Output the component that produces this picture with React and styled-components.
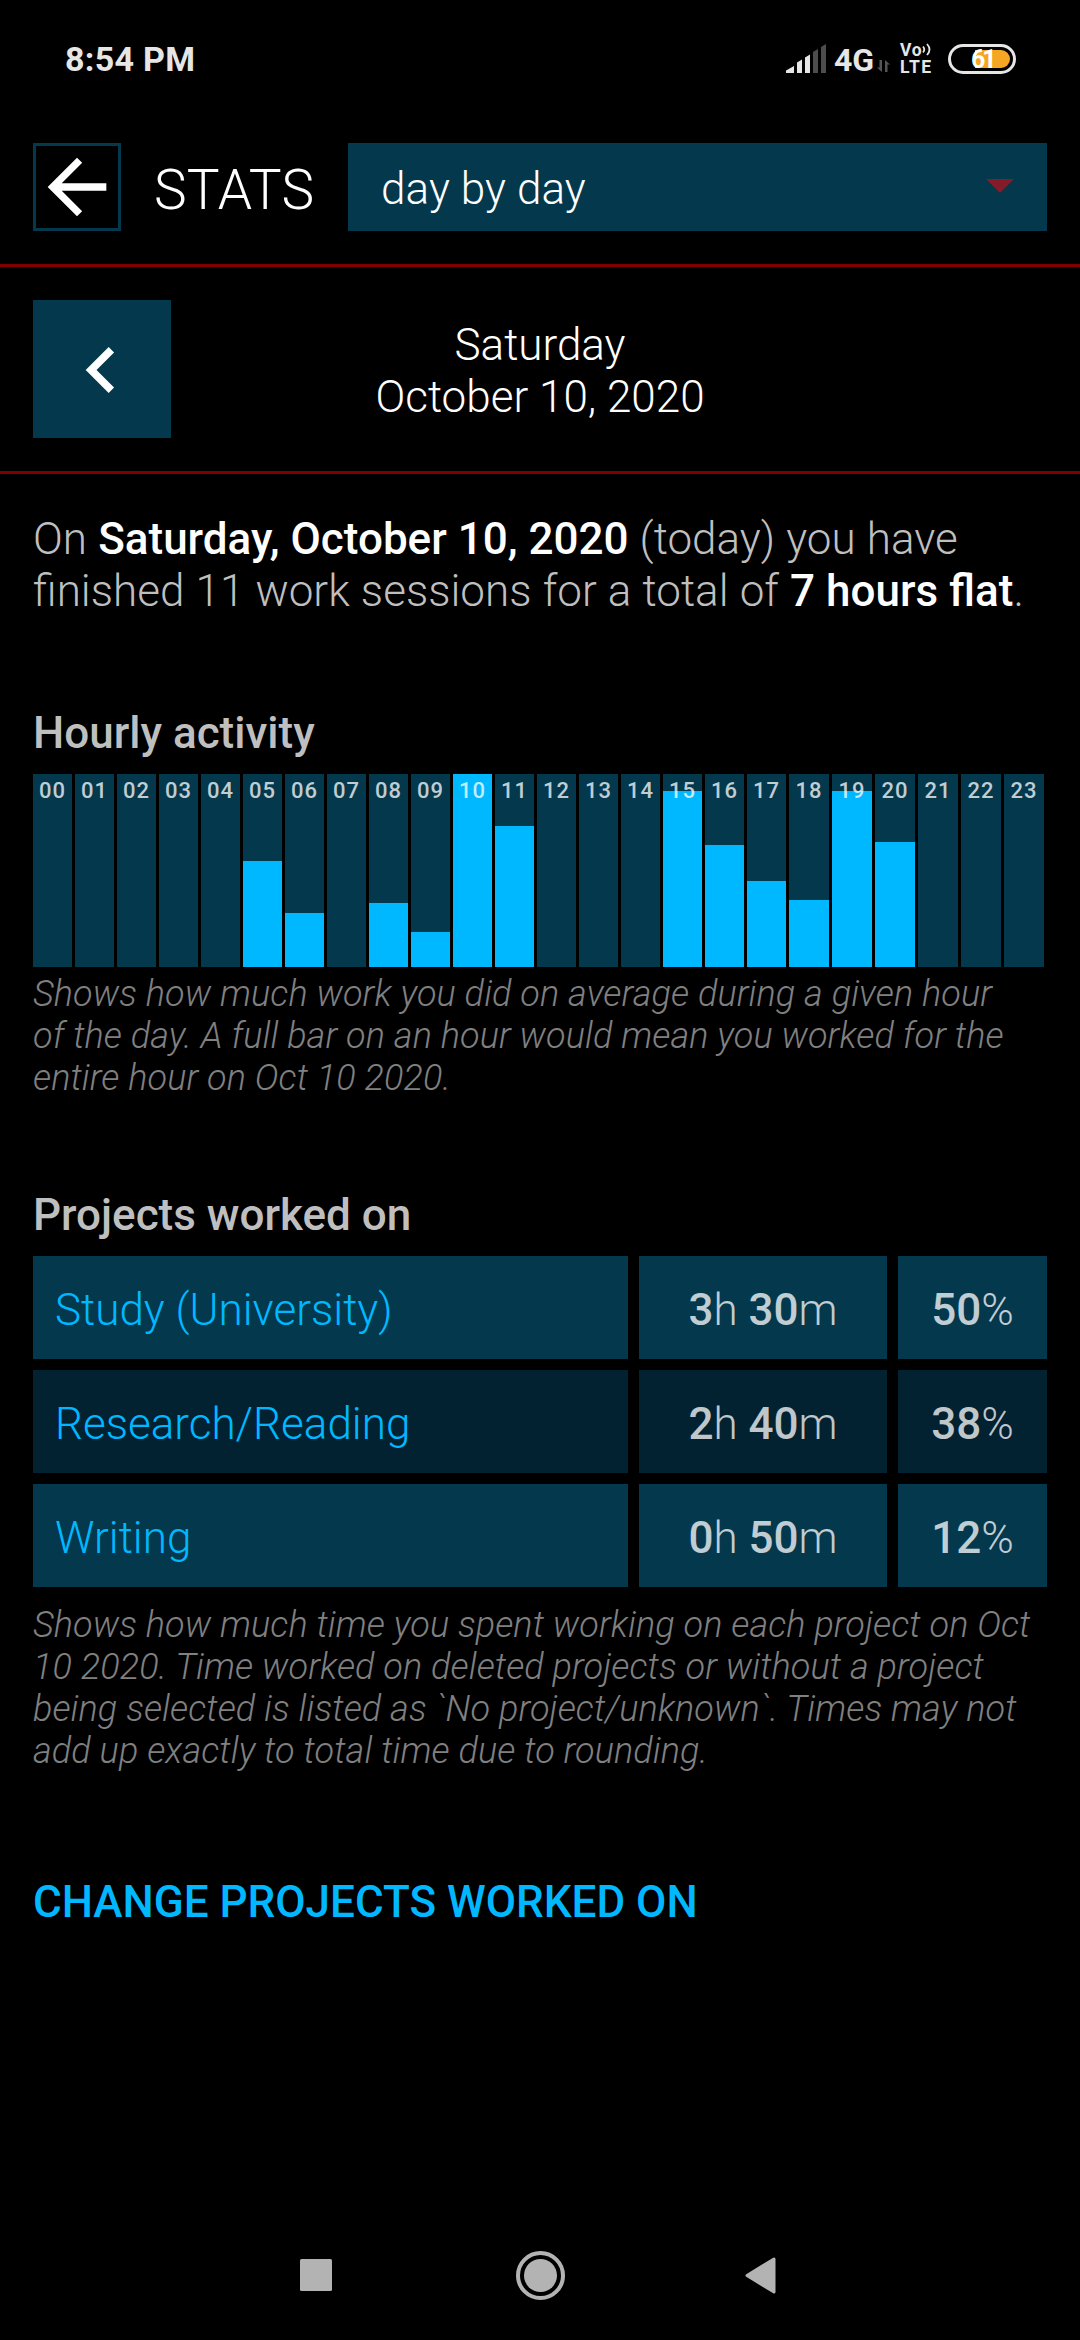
import React from 'react';
import styled, { createGlobalStyle } from 'styled-components';

const GlobalStyle = createGlobalStyle`
    * { box-sizing: border-box; margin: 0; padding: 0; }
    body { background: #000; }
    button { border: 0; background: none; font: inherit; color: inherit; }
    svg { display: block; flex: none; }
`;

const Screen = styled.div`
    width: 1080px; height: 2340px;
    display: flex; flex-direction: column;
    background: #000; color: #bfbfbf;
    font-family: Roboto, sans-serif; font-weight: 300;
    font-size: 44px; line-height: 52px;
    overflow: hidden;
`;

const StatusBar = styled.header`
    height: 110px; padding: 7px 64px 0 65px;
    display: flex; justify-content: space-between; align-items: center;
    color: #e6e6e6; font-weight: 700;
    .time{ font-size: 34px; letter-spacing: 0.3px; }
    .network{ width: 43px; margin: 2px 0 0 8px; font-size: 32px; }
    .icons{ display: flex; align-items: center; }
    .arrows{ margin-top: 15px; }
`;

const VoLte = styled.span`
    width: 35px; margin: 0 13px 0 10px;
    display: grid; font-size: 17.5px; line-height: 17px; letter-spacing: 1.5px;
    .vo{ display: flex; letter-spacing: 0.6px; }
`;

const Toolbar = styled.div`
    height: 157px; padding: 33px;
    display: flex; align-items: flex-start;
    border-bottom: 3px solid #800000;
    color: #fff;
    h1{
        width: 227px; line-height: 88px; padding: 3px 0 0 33px;
        font-size: 55px; font-weight: 300; letter-spacing: 0.2px;
    }
`;

const BackButton = styled.button`
    width: 88px; height: 88px; 
    display: flex; justify-content: center; align-items: center;
    border: 3px solid #04384d;
`;

const Select = styled.button`
    flex: 1; height: 88px; padding: 0 33px 0 33px;
    display: flex; justify-content: space-between; align-items: center;
    background: #04384d;
    span{ padding-top: 4px; letter-spacing: 0.1px; }
    svg{ margin-top: -2px; }
`;

const DateBar = styled.div`
    height: 207px; padding: 33px;
    display: grid; grid-template-columns: 138px 1fr 138px; align-items: start;
    border-bottom: 3px solid #800000;
    color: #fff;
    p{ padding-top: 19px; text-align: center; }
`;

const PrevButton = styled.button`
    height: 138px; padding: 1px 3px 0 0;
    display: flex; justify-content: center; align-items: center;
    background: #04384d;
`;

const Content = styled.main`
    flex: 1; padding: 39px 33px 0;
`;

const Summary = styled.p`
    word-spacing: 0.4px;
    b{ color: #fff; font-weight: 500; word-spacing: 0; }
`;

const Section = styled.section`
    margin-top: 90px;
    h2{ height: 67px; font-size: 44px; font-weight: 500; }
`;

const Caption = styled.p`
    margin-top: ${({ $top }) => $top}px;
    color: #808080; font-style: italic;
    font-size: 36px; line-height: 42px; letter-spacing: 0.1px;
`;

const Chart = styled.div`
    height: 193px;
    display: flex; gap: 3px;
`;

const Hour = styled.div`
    width: ${({ $wide }) => ($wide ? 40 : 39)}px;
    position: relative;
    display: flex; align-items: flex-end;
    background: #04384d;
    span{
        position: absolute; left: 0; top: 4px; width: 100%;
        text-align: center; color: rgba(255,255,255,0.75);
        font-size: 22px; font-weight: 500; line-height: 26px; letter-spacing: 1px;
    }
`;

const Bar = styled.div`
    width: 100%;
    background: #00b8ff;
`;

const Table = styled.div`
    display: grid; gap: 11px;
`;

const Project = styled.div`
    height: 103px;
    display: grid; grid-template-columns: 595px 248px 149px; gap: 11px;
    div{
        padding: 28px 0 0; text-align: center;
        background: ${({ $dark }) => ($dark ? '#022232' : '#04384d')};
        color: rgba(255,255,255,0.75);
    }
    .name{ padding-left: 22px; text-align: left; color: #00b8ff; }
    b{ font-weight: 500; }
`;

const ChangeLink = styled.button`
    display: block; margin-top: 104px;
    color: #00b8ff; font-weight: 500;
`;

const NavBar = styled.nav`
    height: 130px; padding: 1px 300px 0;
    display: flex; justify-content: space-between; align-items: center;
`;

// bar heights in px, 193 is a full hour
const hours = [
    0, 0, 0, 0, 0, 106, 54, 0, 64, 35, 193, 141,
    0, 0, 0, 176, 122, 86, 67, 176, 125, 0, 0, 0,
];

const projects = [
    { name: 'Study (University)', h: 3, m: 30, percent: 50 },
    { name: 'Research/Reading', h: 2, m: 40, percent: 38 },
    { name: 'Writing', h: 0, m: 50, percent: 12 },
];

function Signal() {
    return (
        <svg width="40" height="30" viewBox="0 0 40 30">
            <g fill="#e6e6e6">
                <path d="M0 29V26.5L8 22V29Z" />
                <path d="M11 29V18.5L16 15.5V29Z" />
                <path d="M19 29V13.5L24 10.5V29Z" />
            </g>
            <g fill="#4d4d4d">
                <path d="M27 29V8L32 5V29Z" />
                <path d="M35 29V3L40 0V29Z" />
            </g>
        </svg>
    );
}

function Battery() {
    return (
        <svg width="68" height="30" viewBox="0 0 68 30">
            <rect x="1.5" y="1.5" width="65" height="27" rx="13.5" fill="none" stroke="#e6e6e6" strokeWidth="3" />
            <path d="M27 6H53a9 9 0 0 1 0 18H27Z" fill="#f5a623" />
            <text x="23" y="24" fill="#fff" fontSize="25" fontWeight="700" letterSpacing="-3">61</text>
        </svg>
    );
}

function App() {
    return (
        <>
            <GlobalStyle />
            <Screen>
                <StatusBar>
                    <span className="time">8:54 PM</span>
                    <div className="icons">
                        <Signal />
                        <span className="network">4G</span>
                        <svg className="arrows" width="13" height="12" viewBox="0 0 13 12">
                            <path d="M0 7.5H2.5V0H5V12ZM8 0L13 4.5H10.5V12H8Z" fill="#555" />
                        </svg>
                        <VoLte>
                            <span className="vo">
                                Vo
                                <svg width="10" height="15" viewBox="0 0 10 15" fill="none" stroke="#e6e6e6" strokeWidth="1.8">
                                    <path d="M1 4.5Q3.5 7.5 1 10.5M5 2Q10 7.5 5 13" />
                                </svg>
                            </span>
                            <span>LTE</span>
                        </VoLte>
                        <Battery />
                    </div>
                </StatusBar>

                <Toolbar>
                    <BackButton>
                        <svg width="88" height="88" viewBox="0 0 24 24" fill="#fff">
                            <path d="M20 11H7.83l5.59-5.59L12 4l-8 8 8 8 1.41-1.41L7.83 13H20v-2z" />
                        </svg>
                    </BackButton>
                    <h1>STATS</h1>
                    <Select>
                        <span>day by day</span>
                        <svg width="28" height="14" viewBox="0 0 28 14">
                            <path d="M0 0H28L14 14Z" fill="#831b28" />
                        </svg>
                    </Select>
                </Toolbar>

                <DateBar>
                    <PrevButton>
                        <svg width="92" height="92" viewBox="0 0 24 24" fill="#fff">
                            <path d="M15.41 7.41L14 6l-6 6 6 6 1.41-1.41L10.83 12z" />
                        </svg>
                    </PrevButton>
                    <p>Saturday<br />October 10, 2020</p>
                </DateBar>

                <Content>
                    <Summary>
                        On <b>Saturday, October 10, 2020</b> (today) you have<br />
                        finished 11 work sessions for a total of <b>7 hours flat</b>.
                    </Summary>

                    <Section>
                        <h2>Hourly activity</h2>
                        <Chart>
                            {
                                hours.map((value, index) => (
                                    <Hour key={index} $wide={index > 17}>
                                        <Bar style={{ height: value }} />
                                        <span>{String(index).padStart(2, '0')}</span>
                                    </Hour>
                                ))
                            }
                        </Chart>
                        <Caption $top={6}>
                            Shows how much work you did on average during a given hour<br />
                            of the day. A full bar on an hour would mean you worked for the<br />
                            entire hour on Oct 10 2020.
                        </Caption>
                    </Section>

                    <Section>
                        <h2>Projects worked on</h2>
                        <Table>
                            {
                                projects.map(({ name, h, m, percent }, index) => (
                                    <Project key={name} $dark={index % 2 === 1}>
                                        <div className="name">{name}</div>
                                        <div><b>{h}</b>h <b>{m}</b>m</div>
                                        <div><b>{percent}</b>%</div>
                                    </Project>
                                ))
                            }
                        </Table>
                        <Caption $top={17}>
                            Shows how much time you spent working on each project on Oct<br />
                            10 2020. Time worked on deleted projects or without a project<br />
                            being selected is listed as `No project/unknown`. Times may not<br />
                            add up exactly to total time due to rounding.
                        </Caption>
                    </Section>

                    <ChangeLink>CHANGE PROJECTS WORKED ON</ChangeLink>
                </Content>

                <NavBar>
                    <svg width="37" height="33" viewBox="0 0 37 33">
                        <rect width="32" height="32" rx="1.5" fill="#b3b3b3" />
                    </svg>
                    <svg width="49" height="49" viewBox="0 0 49 49">
                        <circle cx="24.5" cy="24.5" r="22.5" fill="none" stroke="#b3b3b3" strokeWidth="4" />
                        <circle cx="24.5" cy="24.5" r="16.5" fill="#b3b3b3" />
                    </svg>
                    <svg width="36" height="37" viewBox="0 0 36 37">
                        <path d="M3 18.5L30 2V35Z" fill="#b3b3b3" stroke="#b3b3b3" strokeWidth="3" strokeLinejoin="round" />
                    </svg>
                </NavBar>
            </Screen>
        </>
    );
}

export default App;
